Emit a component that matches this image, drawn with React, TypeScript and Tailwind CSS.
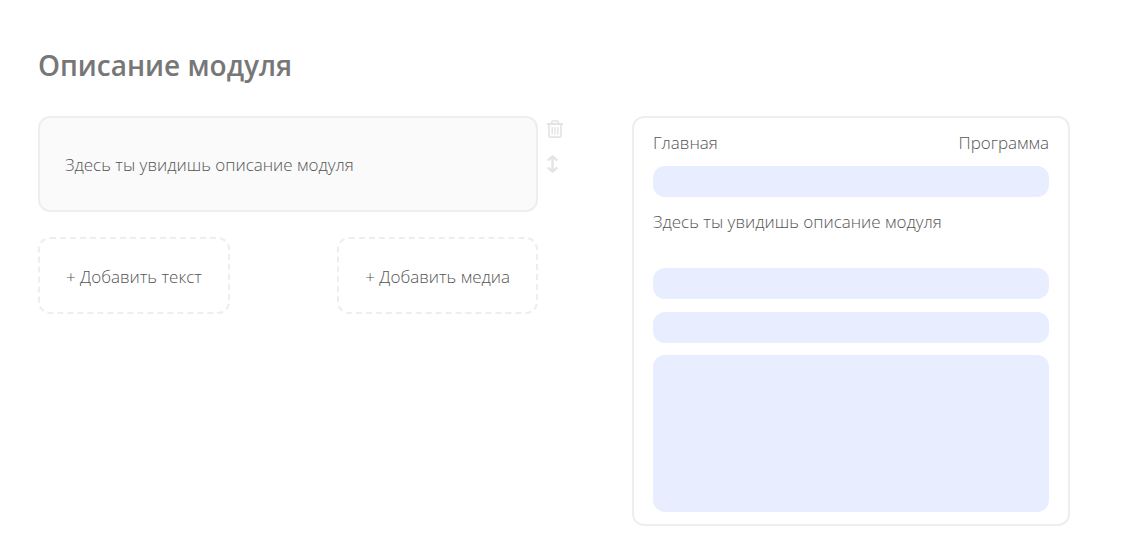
import { useState } from "react";

function TrashIcon() {
  return (
    <svg viewBox="0 0 16 18" className="h-[18px] w-4" fill="none" stroke="currentColor" aria-hidden="true">
      <path d="M0 4h16" strokeWidth="2" />
      <path d="M4.700 3.600V2.300Q4.700 1 6 1h4q1.300 0 1.300 1.300V3.600" strokeWidth="1.700" />
      <path d="M2 4.500V15.800Q2 17.200 3.400 17.200h9.200Q14 17.200 14 15.800V4.500" strokeWidth="1.700" />
      <path d="M5.200 7v7.500M8 7v7.500M10.800 7v7.500" strokeWidth="1.400" />
    </svg>
  );
}

function MoveIcon() {
  return (
    <svg viewBox="0 0 11 18" className="h-[18px] w-[11px]" fill="none" stroke="currentColor" strokeWidth="2.400" strokeLinecap="round" strokeLinejoin="round" aria-hidden="true">
      <path d="M5.500 2v14M1.500 4.800L5.500 1.300l4 3.500M1.500 13.200L5.500 16.700l4-3.500" />
    </svg>
  );
}

const addButton =
  "h-[77px] rounded-xl border-2 border-dashed border-[#eeeeee] px-[26px] pt-[2px] whitespace-nowrap cursor-pointer";

export default function App() {
  const [text, setText] = useState("Здесь ты увидишь описание модуля");

  return (
    <main className="pt-[45px] pr-[52px] pb-6 pl-[38px] font-['Open_Sans','Noto_Sans',sans-serif] text-[17px] leading-6 font-[320] text-[#555555]">
      <h1 className="text-[28px] leading-10 font-semibold text-[#777777]">Описание модуля</h1>

      <div className="mt-[31px] grid grid-cols-[525fr_438fr] items-start gap-[69px]">
        <section aria-label="Редактор">
          <div className="flex gap-[9px]">
            <textarea
              aria-label="Описание модуля"
              rows={1}
              value={text}
              onChange={(e) => setText(e.target.value)}
              className="block h-24 min-w-0 flex-1 resize-none overflow-hidden rounded-xl border-2 border-[#eeeeee] bg-[#fafafa] px-[25px] pt-[35px] pb-[33px] outline-none"
            />
            <div className="flex w-4 flex-col items-start gap-[17px] pt-1 text-[#e4e4e4]">
              <button type="button" aria-label="Удалить" className="cursor-pointer">
                <TrashIcon />
              </button>
              <button type="button" aria-label="Переместить" className="cursor-pointer">
                <MoveIcon />
              </button>
            </div>
          </div>
          <div className="mt-[25px] mr-[25px] flex justify-between">
            <button type="button" className={addButton}>+ Добавить текст</button>
            <button type="button" className={addButton}>+ Добавить медиа</button>
          </div>
        </section>

        <section aria-label="Предпросмотр" className="rounded-xl border-2 border-[#eeeeee] px-[19px] pt-[13px] pb-3">
          <nav className="flex justify-between">
            <a href="#main">Главная</a>
            <a href="#program">Программа</a>
          </nav>
          <div className="mt-[11px] h-[31px] rounded-xl bg-[#e8eeff]" />
          <p className="mt-[13px] min-h-12">{text}</p>
          <div className="mt-[10px] h-[31px] rounded-xl bg-[#e8eeff]" />
          <div className="mt-[13px] h-[31px] rounded-xl bg-[#e8eeff]" />
          <div className="mt-3 h-[157px] rounded-xl bg-[#e8eeff]" />
        </section>
      </div>
    </main>
  );
}
